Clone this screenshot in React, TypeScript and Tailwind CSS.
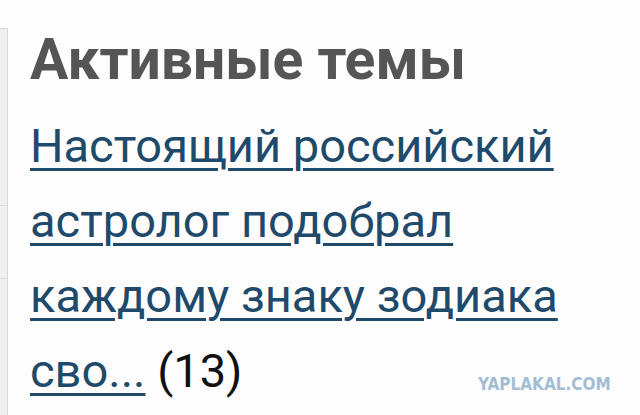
export default function App() {
  return (
    <div className="relative flex h-[415px] w-[640px] overflow-hidden bg-[#fdfdfd]">
      {/* боковая колонка, почти целиком за краем экрана */}
      <aside className="mt-[28px] flex w-[8px] shrink-0 flex-col border-t border-r border-[#d9d9d9] bg-[#efefef]">
        <div className="h-[177px] border-b border-[#dcdcdc]" />
        <div className="h-[73px] border-b border-[#dcdcdc]" />
        <div className="flex-1" />
      </aside>

      <main className="w-[590px] pl-[22px] pt-[26px] font-['Roboto',sans-serif]">
        <h2 className="text-[57px] leading-[68px] font-bold text-[#555555]">
          Активные темы
        </h2>
        <div className="mt-[14px] text-[47px] leading-[75px]">
          <a
            href="#"
            className="text-[#1f4a6b] underline decoration-[3px] underline-offset-[6px]"
          >
            Настоящий российский астролог подобрал каждому знаку зодиака сво...
          </a>{' '}
          <span className="text-[#111111]">(13)</span>
        </div>
      </main>

      <span className="absolute top-[372px] left-[478px] font-['DejaVu_Sans_Condensed','DejaVu_Sans',sans-serif] text-[17px] font-bold text-[#a3bdd3]">
        YAPLAKAL.COM
      </span>
    </div>
  )
}
